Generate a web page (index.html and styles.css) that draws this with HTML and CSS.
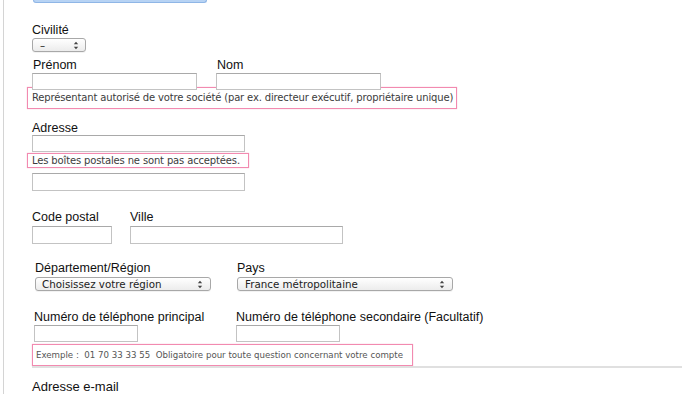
FILE: index.html
```html
<!DOCTYPE html>
<html lang="fr">
<head>
<meta charset="utf-8">
<link rel="stylesheet" href="styles.css">
</head>
<body>
<div class="page">
  <div class="topbar"></div>

  <div class="field civ">
    <div class="label">Civilité</div>
    <div class="select sel-civ"><span class="sel-text">–</span><svg class="arrows" width="6" height="9" viewBox="0 0 6 9"><path d="M0.8 3.3 L3 0.8 L5.2 3.3 Z M0.8 5.7 L3 8.2 L5.2 5.7 Z" fill="#444"/></svg></div>
  </div>

  <div class="row r-name">
    <div class="field w-prenom">
      <div class="label l1">Prénom</div>
      <div class="input in-prenom"></div>
    </div>
    <div class="field">
      <div class="label l1">Nom</div>
      <div class="input in-nom"></div>
    </div>
  </div>
  <div class="hint hint-name">Représentant autorisé de votre société (par ex. directeur exécutif, propriétaire unique)</div>

  <div class="field r-addr">
    <div class="label lh13">Adresse</div>
    <div class="input in-addr"></div>
  </div>
  <div class="hint hint-addr">Les boîtes postales ne sont pas acceptées.</div>
  <div class="input in-addr in-addr2"></div>

  <div class="row r-cp">
    <div class="field w-cp">
      <div class="label">Code postal</div>
      <div class="input in-cp"></div>
    </div>
    <div class="field">
      <div class="label">Ville</div>
      <div class="input in-ville"></div>
    </div>
  </div>

  <div class="row r-dep">
    <div class="field w-dep">
      <div class="label">Département/Région</div>
      <div class="select sel-dep"><span class="sel-text">Choisissez votre région</span><svg class="arrows" width="6" height="9" viewBox="0 0 6 9"><path d="M0.8 3.3 L3 0.8 L5.2 3.3 Z M0.8 5.7 L3 8.2 L5.2 5.7 Z" fill="#444"/></svg></div>
    </div>
    <div class="field">
      <div class="label">Pays</div>
      <div class="select sel-pays"><span class="sel-text">France métropolitaine</span><svg class="arrows" width="6" height="9" viewBox="0 0 6 9"><path d="M0.8 3.3 L3 0.8 L5.2 3.3 Z M0.8 5.7 L3 8.2 L5.2 5.7 Z" fill="#444"/></svg></div>
    </div>
  </div>

  <div class="row r-tel">
    <div class="field w-tel">
      <div class="label">Numéro de téléphone principal</div>
      <div class="input in-tel"></div>
    </div>
    <div class="field">
      <div class="label">Numéro de téléphone secondaire (Facultatif)</div>
      <div class="input in-tel"></div>
    </div>
  </div>
  <div class="hint hint-tel">Exemple :&nbsp; 01 70 33 33 55&nbsp; Obligatoire pour toute question concernant votre compte</div>
  <div class="divider"></div>

  <div class="label email">Adresse e-mail</div>
</div>
</body>
</html>
```

FILE: styles.css
```css
html, body {
  margin: 0;
  padding: 0;
  background: #fff;
  overflow: hidden;
}
body {
  width: 700px;
  height: 394px;
  font-family: "Liberation Sans", Arial, sans-serif;
  color: #111;
}
.page {
  margin-left: 3px;
  border-left: 1px solid #d4d4d4;
  height: 394px;
  padding-left: 28px;
  box-sizing: border-box;
}
.topbar {
  margin-left: 1px;
  width: 174px;
  height: 3px;
  background: #b7d3f4;
  border: 1px solid #8fb6e6;
  border-top: none;
  border-radius: 0 0 3px 3px;
  box-sizing: border-box;
}
.label {
  font-size: 12.5px;
  line-height: 14px;
  white-space: nowrap;
}
.l1 { padding-left: 1px; }
.lh13 { line-height: 13px; }
.row { display: flex; }
.field { display: flex; flex-direction: column; align-items: flex-start; }

.input {
  height: 17px;
  border: 1px solid #c3c3c3;
  border-top-color: #a9a9a9;
  box-sizing: border-box;
  background: #fff;
}
.select {
  height: 14px;
  border: 1px solid #a8a8a8;
  border-radius: 3px;
  box-sizing: border-box;
  background: linear-gradient(#ffffff, #ececec);
  display: flex;
  align-items: center;
  justify-content: space-between;
  font-family: "DejaVu Sans", Verdana, sans-serif;
  font-size: 10.3px;
  color: #222;
  box-shadow: 0 1px 0 rgba(0,0,0,0.05);
}
.sel-text { white-space: nowrap; }
.arrows { flex: none; }

.civ { margin-top: 20px; }
.sel-civ { margin-top: 1px; width: 54px; padding: 0 6px 0 7px; }

.r-name { margin-top: 6px; }
.w-prenom { width: 184px; }
.in-prenom { margin-top: 1px; width: 165px; }
.in-nom { margin-top: 1px; width: 165px; }

.hint {
  border: 1px solid #f28ab0;
  box-shadow: 0 0 1px rgba(240, 130, 170, 0.6);
  box-sizing: border-box;
  font-family: "DejaVu Sans", Verdana, sans-serif;
  font-size: 10px;
  letter-spacing: -0.15px;
  color: #3c3c3c;
  white-space: nowrap;
  margin-left: -5px;
  padding-left: 4px;
}
.hint-name { margin-top: -3px; width: 430px; height: 22px; line-height: 20px; }

.r-addr { margin-top: 13px; }
.in-addr { width: 213px; }
.hint-addr { margin-top: 1px; width: 222px; height: 15px; line-height: 13px; }
.in-addr2 { margin-top: 5px; height: 18px; }

.r-cp { margin-top: 19px; }
.w-cp { width: 98px; }
.in-cp { margin-top: 2px; width: 80px; height: 18px; }
.in-ville { margin-top: 2px; width: 213px; height: 18px; }

.r-dep { margin-top: 17px; padding-left: 3px; }
.w-dep { width: 202px; }
.sel-dep { margin-top: 2px; width: 176px; padding: 0 7px 0 6px; }
.sel-pays { margin-top: 2px; width: 216px; padding: 0 7px 0 7px; }

.r-tel { margin-top: 19px; padding-left: 2px; }
.w-tel { width: 202px; }
.in-tel { margin-top: 1px; width: 104px; }

.hint-tel {
  margin-top: 2px;
  margin-left: 0;
  width: 381px;
  height: 22px;
  line-height: 20px;
  font-size: 8.65px;
  letter-spacing: 0;
  color: #555;
  padding-left: 3px;
}
.divider {
  margin-top: 0;
  width: 650px;
  height: 2px;
  background: #e0e0e0;
}
.email {
  margin-top: 12px;
  font-size: 13px;
}
```
